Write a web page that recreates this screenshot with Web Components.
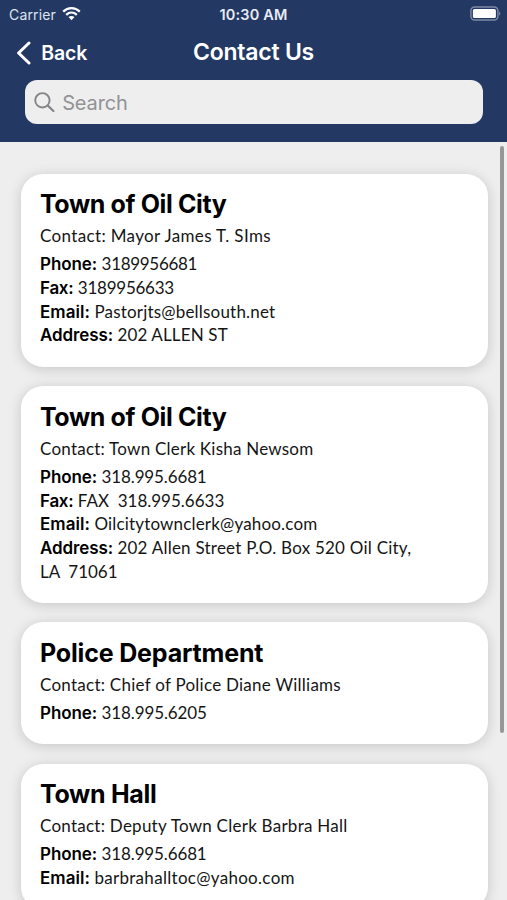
<!DOCTYPE html>
<html lang="en">
<head>
<meta charset="utf-8">
<title>Contact Us</title>
<style>
  html, body { margin: 0; height: 100%; overflow: hidden; }
  body { background: #eeeeef; font-family: Inter, "Liberation Sans", sans-serif; }
</style>
</head>
<body>
<phone-screen>
  <status-bar slot="header" carrier="Carrier" time="10:30 AM"></status-bar>
  <nav-bar slot="header" back="Back" heading="Contact Us"></nav-bar>
  <search-field slot="header" placeholder="Search"></search-field>

  <contact-card>
    <fit-text slot="title" width="186.5">Town of Oil City</fit-text>
    <fit-text slot="person" width="231">Contact: Mayor James T. SIms</fit-text>
    <contact-row><fit-text slot="label" width="57.2">Phone:</fit-text><fit-text width="95.5">3189956681</fit-text></contact-row>
    <contact-row><fit-text slot="label" width="33.4">Fax:</fit-text><fit-text width="96.2">3189956633</fit-text></contact-row>
    <contact-row><fit-text slot="label" width="50">Email:</fit-text><fit-text width="181">Pastorjts@bellsouth.net</fit-text></contact-row>
    <contact-row><fit-text slot="label" width="73">Address:</fit-text><fit-text width="110.5">202 ALLEN ST</fit-text></contact-row>
  </contact-card>

  <contact-card>
    <fit-text slot="title" width="186.5">Town of Oil City</fit-text>
    <fit-text slot="person" width="273.5">Contact: Town Clerk Kisha Newsom</fit-text>
    <contact-row><fit-text slot="label" width="57.2">Phone:</fit-text><fit-text width="105">318.995.6681</fit-text></contact-row>
    <contact-row><fit-text slot="label" width="33.4">Fax:</fit-text><fit-text width="146.5">FAX  318.995.6633</fit-text></contact-row>
    <contact-row><fit-text slot="label" width="50">Email:</fit-text><fit-text width="223">Oilcitytownclerk@yahoo.com</fit-text></contact-row>
    <contact-row><fit-text slot="label" width="73">Address:</fit-text><fit-text width="294">202 Allen Street P.O. Box 520 Oil City,</fit-text></contact-row>
    <contact-row><fit-text width="77.5">LA  71061</fit-text></contact-row>
  </contact-card>

  <contact-card>
    <fit-text slot="title" width="223.3">Police Department</fit-text>
    <fit-text slot="person" width="301">Contact: Chief of Police Diane Williams</fit-text>
    <contact-row><fit-text slot="label" width="57.2">Phone:</fit-text><fit-text width="105.2">318.995.6205</fit-text></contact-row>
  </contact-card>

  <contact-card>
    <fit-text slot="title" width="116.5">Town Hall</fit-text>
    <fit-text slot="person" width="307.5">Contact: Deputy Town Clerk Barbra Hall</fit-text>
    <contact-row><fit-text slot="label" width="57.2">Phone:</fit-text><fit-text width="105">318.995.6681</fit-text></contact-row>
    <contact-row><fit-text slot="label" width="50">Email:</fit-text><fit-text width="200.5">barbrahalltoc@yahoo.com</fit-text></contact-row>
  </contact-card>
</phone-screen>

<script>
const define = (name, html, setup) => customElements.define(name, class extends HTMLElement {
  constructor() {
    super();
    this.attachShadow({ mode: 'open' }).innerHTML = html;
  }
  connectedCallback() { if (setup) setup(this, this.shadowRoot); }
});

define('phone-screen', `
  <style>
    :host { display: flex; flex-direction: column; height: 100vh; position: relative; overflow: hidden; }
    header { box-sizing: border-box; height: 142.4px; flex: none; background: #233963; color: #fff; }
    main { flex: 1; min-height: 0; overflow: hidden; display: flex; flex-direction: column;
      gap: 19.8px; padding: 31.6px 19.5px 0 20.5px; }
    .thumb { position: absolute; right: 3.5px; top: 146px; width: 4px; height: 587px; border-radius: 2px; background: #979798; }
  </style>
  <header><slot name="header"></slot></header>
  <main><slot></slot></main>
  <div class="thumb"></div>`);

define('status-bar', `
  <style>
    :host { display: grid; grid-template-columns: 1fr auto 1fr; align-items: center; height: 28px; padding: 0 6px 0 9px; }
    .left { display: flex; align-items: center; gap: 6px; font-size: 14px; color: #dfe4ef; }
    .left svg { margin-top: -2px; }
    .time { font-size: 14.5px; font-weight: 600; color: #e8ecf5; margin-right: 3px; }
    .battery { justify-self: end; margin-top: -1px; }
    svg { display: block; }
  </style>
  <div class="left"><fit-text class="carrier" width="47"></fit-text>
    <svg width="19" height="15" viewBox="0 0 19 15" fill="none" stroke="#fff" stroke-width="2.3">
      <path d="M1.2 5.6C6 .9 13 .9 17.8 5.6"/><path d="M4.2 8.8C7.3 5.9 11.7 5.9 14.8 8.8"/>
      <path d="M6.5 11.1C8.2 9.5 10.8 9.5 12.5 11.1L9.5 14.2Z" fill="#fff" stroke="none"/>
    </svg></div>
  <fit-text class="time" width="68"></fit-text>
  <svg class="battery" width="31" height="16" viewBox="0 0 31 16">
    <rect x=".9" y="1" width="27" height="13" rx="3.8" fill="none" stroke="#7f8ba6" stroke-width="1.4"/>
    <rect x="2.9" y="3" width="23" height="9" rx="1.6" fill="#fff"/>
    <path d="M29.2 5.5C30.8 6.2 30.8 8.8 29.2 9.5Z" fill="#7f8ba6"/>
  </svg>`,
  (el, root) => {
    root.querySelector('.carrier').textContent = el.getAttribute('carrier');
    root.querySelector('.time').textContent = el.getAttribute('time');
  });

define('nav-bar', `
  <style>
    :host { display: grid; grid-template-columns: 1fr auto 1fr; align-items: center; height: 48px; padding: 0 16px; }
    .back { display: flex; align-items: center; gap: 9.3px; font-size: 19.5px; font-weight: 600; padding-top: 1px; }
    .heading { font-size: 23px; font-weight: 560; padding-bottom: 1px; }
    svg { display: block; }
  </style>
  <div class="back">
    <svg width="16" height="24" viewBox="0 0 16 24" fill="none" stroke="#fff" stroke-width="3" stroke-linecap="round" stroke-linejoin="round"><path d="M13 2 2.6 12 13 22"/></svg>
    <fit-text class="label" width="45.8"></fit-text>
  </div>
  <fit-text class="heading" width="121"></fit-text>`,
  (el, root) => {
    root.querySelector('.label').textContent = el.getAttribute('back');
    root.querySelector('.heading').textContent = el.getAttribute('heading');
  });

define('search-field', `
  <style>
    :host { display: flex; align-items: center; gap: 6.8px; box-sizing: border-box; height: 44px; margin: 4.4px 24.5px 0 25.2px;
      padding: 1px 9.2px 0; border-radius: 12px; background: #eeeeef; color: #929295; font-size: 20px; }
    svg { display: block; }
  </style>
  <svg width="21" height="21" viewBox="0 0 21 21" fill="none" stroke="#858588" stroke-width="1.9" stroke-linecap="round"><circle cx="8.4" cy="8.3" r="7.2"/><path d="m13.7 13.5 5.7 5.5" stroke-width="2.3"/></svg>
  <fit-text width="65.5"></fit-text>`,
  (el, root) => { root.querySelector('fit-text').textContent = el.getAttribute('placeholder'); });

define('contact-card', `
  <style>
    :host { display: flex; flex-direction: column; flex: none; padding: 14.5px 19.5px 19.5px; border-radius: 22px;
      background: #fff; color: #050505; box-shadow: 0 2px 13px rgba(0, 0, 0, .17); }
    .title { height: 33px; line-height: 33px; font-size: 25px; font-weight: 700; color: #000; }
    .person { height: 31px; font: 17px/29px Lato, "Liberation Sans", sans-serif; color: #151515; }
  </style>
  <div class="title"><slot name="title"></slot></div>
  <div class="person"><slot name="person"></slot></div>
  <slot></slot>`);

define('contact-row', `
  <style>
    :host { display: flex; gap: 4.4px; align-items: baseline; height: 23.67px; line-height: 23.67px;
      font-family: Lato, "Liberation Sans", sans-serif; font-size: 17px; color: #151515; }
    ::slotted([slot=label]) { font-family: Inter, "Liberation Sans", sans-serif; font-weight: 600; color: #000; }
  </style>
  <slot name="label"></slot><slot></slot>`);

/* Single line of text whose tracking is adjusted to fill its width attribute. */
customElements.define('fit-text', class extends HTMLElement {
  constructor() {
    super();
    this.attachShadow({ mode: 'open' }).innerHTML =
      '<style>:host { display: inline-block; white-space: pre; } span { display: inline-block; }</style><span><slot></slot></span>';
  }
  connectedCallback() {
    requestAnimationFrame(() => this.fit());
    this.fit();
  }
  fit() {
    const span = this.shadowRoot.querySelector('span');
    const count = this.textContent.length;
    if (!count) return;
    span.style.letterSpacing = '0.001px';
    const natural = span.getBoundingClientRect().width;
    span.style.letterSpacing = (Number(this.getAttribute('width')) - natural) / count + 'px';
  }
});
</script>
</body>
</html>
